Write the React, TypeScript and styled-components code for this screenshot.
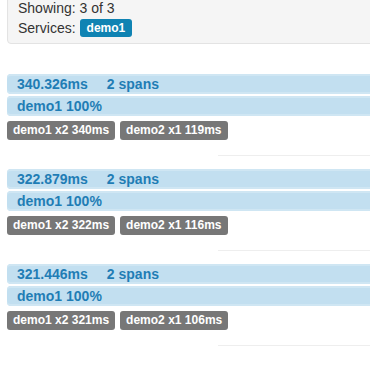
import { createGlobalStyle } from 'styled-components'
import styled from 'styled-components'

interface Trace {
  duration: string
  spans: number
  service: string
  percent: number
  tags: { name: string; count: number; ms: number }[]
}

const traces: Trace[] = [
  {
    duration: '340.326ms',
    spans: 2,
    service: 'demo1',
    percent: 100,
    tags: [
      { name: 'demo1', count: 2, ms: 340 },
      { name: 'demo2', count: 1, ms: 119 }
    ]
  },
  {
    duration: '322.879ms',
    spans: 2,
    service: 'demo1',
    percent: 100,
    tags: [
      { name: 'demo1', count: 2, ms: 322 },
      { name: 'demo2', count: 1, ms: 116 }
    ]
  },
  {
    duration: '321.446ms',
    spans: 2,
    service: 'demo1',
    percent: 100,
    tags: [
      { name: 'demo1', count: 2, ms: 321 },
      { name: 'demo2', count: 1, ms: 106 }
    ]
  }
]

const GlobalStyle = createGlobalStyle`
  body {
    margin: 0;
    overflow: hidden;
    background: #fff;
    font-family: "Liberation Sans", Arial, sans-serif;
    font-size: 14px;
    color: #333;
  }
`

const App = () => (
  <>
    <GlobalStyle />
    <Page>
      <Well>
        <WellLine>Showing: 3 of 3</WellLine>
        <WellLine>
          Services: <ServiceBadge>demo1</ServiceBadge>
        </WellLine>
      </Well>
      <TraceList>
        {traces.map((trace) => (
          <TraceItem key={trace.duration}>
            <Bar>
              <BarText>{trace.duration}</BarText>
              <BarText>{trace.spans} spans</BarText>
            </Bar>
            <Bar>
              <BarText>
                {trace.service} {trace.percent}%
              </BarText>
            </Bar>
            <Tags>
              {trace.tags.map((tag) => (
                <Tag key={tag.name}>
                  {tag.name} x{tag.count} {tag.ms}ms
                </Tag>
              ))}
            </Tags>
            <Divider />
          </TraceItem>
        ))}
      </TraceList>
    </Page>
  </>
)

export default App

const Page = styled.div`
  padding-left: 7px;
  margin-right: -40px;
`

const Well = styled.div`
  margin-top: -12px;
  padding: 9px 10px 5px 10px;
  background: #f5f5f5;
  border: 1px solid #e3e3e3;
  border-radius: 4px;
  box-shadow: inset 0 1px 1px rgba(0, 0, 0, 0.05);
`

const WellLine = styled.div`
  display: flex;
  align-items: center;
  gap: 4px;
  height: 20px;
  line-height: 20px;
`

const ServiceBadge = styled.span`
  display: inline-block;
  height: 18px;
  line-height: 18px;
  padding: 0 7px;
  border-radius: 3px;
  background: #0f83b3;
  color: #fff;
  font-weight: bold;
  font-size: 12px;
`

const TraceList = styled.div`
  margin-top: 30px;
`

const TraceItem = styled.div`
  display: flex;
  flex-direction: column;
`

const Bar = styled.div`
  display: flex;
  gap: 19px;
  height: 20px;
  line-height: 20px;
  margin-bottom: 2px;
  padding-left: 10px;
  background: #c2dff0;
  border-radius: 4px 0 0 4px;
  box-shadow: inset 0 2px 0 #cfe6f3, inset 0 -2px 0 #cfe6f3;
`

const BarText = styled.span`
  font-weight: bold;
  color: #1f7db5;
`

const Tags = styled.div`
  display: flex;
  gap: 5px;
  margin-top: 3px;
`

const Tag = styled.span`
  height: 19px;
  line-height: 19px;
  padding: 0 6px;
  border-radius: 3px;
  background: #777;
  color: #fff;
  font-weight: bold;
  font-size: 12px;
`

const Divider = styled.div`
  margin: 15px 0 13px 211px;
  border-top: 1px solid #eee;
`
